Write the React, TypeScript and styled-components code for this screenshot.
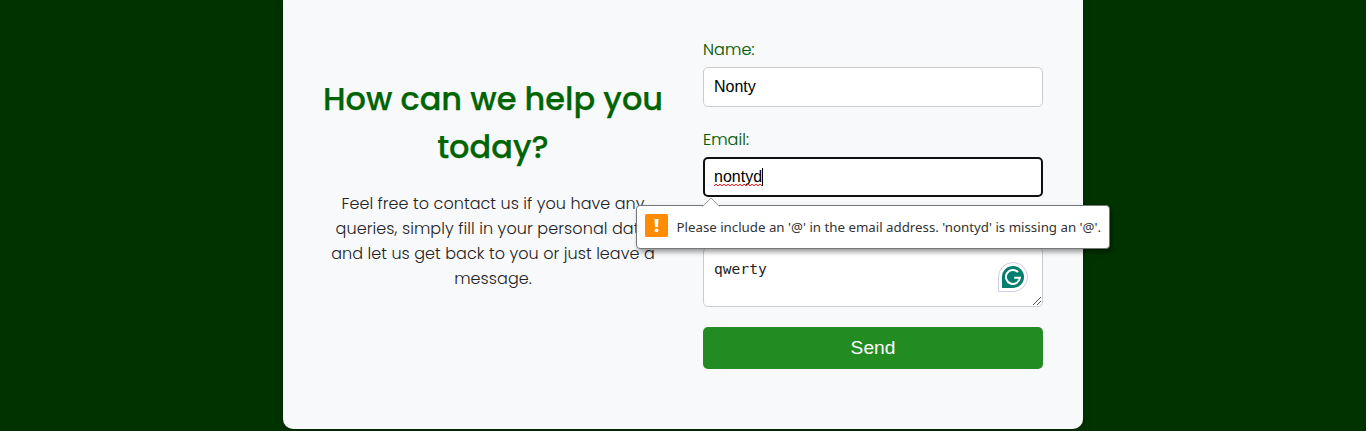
import React from "react";
import styled, { createGlobalStyle } from "styled-components";

const GlobalStyle = createGlobalStyle`
  * { box-sizing: border-box; }
  html, body { margin: 0; height: 431px; overflow: hidden; background: #003300; }
`;

const Page = styled.div`
  display: flex;
  justify-content: center;
  height: 431px;
  background: #003300;
  font-family: Poppins, Inter, "Open Sans", sans-serif;
`;

const Card = styled.main`
  display: grid;
  grid-template-columns: 340px 340px;
  gap: 40px;
  width: 800px;
  height: 429px;
  padding: 0 40px;
  background: #f8f9fb;
  border-radius: 0 0 10px 10px;
  box-shadow: 0 4px 8px rgba(0, 0, 0, 0.2);
`;

const Intro = styled.section`
  padding-top: 75px;
  text-align: center;
`;

const Title = styled.h1`
  margin: 0 0 20px;
  font-size: 32px;
  line-height: 48px;
  font-weight: 500;
  color: #006400;
  -webkit-text-stroke: 0.25px #006400;
`;

const Lead = styled.p`
  margin: 0;
  font-size: 16px;
  line-height: 25px;
  font-weight: 300;
  color: #222;
`;

const Line = styled.span<{ $track?: number }>`
  display: block;
  white-space: nowrap;
  letter-spacing: ${({ $track = 0 }) => $track}px;
`;

const Form = styled.form`
  display: flex;
  flex-direction: column;
  padding-top: 37px;
`;

const Field = styled.div`
  position: relative;
  display: flex;
  flex-direction: column;
  height: 90px;
`;

const Label = styled.label`
  height: 30px;
  font-size: 16px;
  line-height: 25px;
  font-weight: 300;
  letter-spacing: 0.1px;
  color: #005a00;
  -webkit-text-stroke: 0.15px #005a00;
`;

const InputBox = styled.div<{ $focused?: boolean }>`
  display: flex;
  align-items: center;
  height: 40px;
  padding: 0 ${({ $focused }) => ($focused ? 9 : 10)}px;
  border: ${({ $focused }) => ($focused ? "2px solid #101010" : "1px solid #ccc")};
  border-radius: 5px;
  background: #fff;
  font: 16px "Liberation Sans", Arial, sans-serif;
  color: #000;
`;

const Typed = styled.span`
  position: relative;
`;

const Squiggle = styled.svg`
  position: absolute;
  left: 0;
  top: 15px;
`;

const Caret = styled.i`
  width: 1px;
  height: 18px;
  background: #000;
`;

const Message = styled.div`
  position: relative;
  height: 60px;
  margin-top: 30px;
  padding: 11px 10px 0;
  border: 1px solid #ccc;
  border-radius: 5px;
  background: #fff;
  font: 14.6px/20px "DejaVu Sans Mono", monospace;
  color: #222;
`;

const Grip = styled.svg`
  position: absolute;
  right: 0;
  bottom: 0;
`;

const Assistant = styled.svg`
  position: absolute;
  right: 14px;
  bottom: 14px;
`;

const Send = styled.button`
  height: 42px;
  margin-top: 20px;
  border: 0;
  border-radius: 5px;
  background: #228b22;
  color: #fff;
  font: 19.2px "Liberation Sans", Arial, sans-serif;
`;

const Bubble = styled.div`
  position: absolute;
  z-index: 2;
  left: -67px;
  top: 78px;
  display: flex;
  align-items: center;
  width: 474px;
  height: 44px;
  padding: 0 8px;
  border: 1px solid #777;
  border-radius: 4px;
  background: #fff;
  box-shadow: 2px 3px 5px rgba(0, 0, 0, 0.4);
  font: 13.3px "Noto Sans", "Open Sans", sans-serif;
  color: #333;
  white-space: nowrap;
`;

const Pointer = styled.svg`
  position: absolute;
  left: 65px;
  top: -9px;
`;

const Warning = styled.svg`
  flex: none;
  margin: -4px 8.5px 0 0;
`;

const BubbleText = styled.span`
  letter-spacing: -0.01px;
`;

export default function App() {
  return (
    <Page>
      <GlobalStyle />
      <Card>
        <Intro>
          <Title>
            <Line $track={-0.05}>How can we help you</Line>
            <Line>today?</Line>
          </Title>
          <Lead>
            <Line $track={0.05}>Feel free to contact us if you have any</Line>
            <Line $track={0.08}>queries, simply fill in your personal data</Line>
            <Line $track={0.05}>and let us get back to you or just leave a</Line>
            <Line $track={0.08}>message.</Line>
          </Lead>
        </Intro>
        <Form>
          <Field>
            <Label>Name:</Label>
            <InputBox>Nonty</InputBox>
          </Field>
          <Field>
            <Label>Email:</Label>
            <InputBox $focused>
              <Typed>
                nontyd
                <Squiggle width="48" height="4" viewBox="0 0 48 4">
                  <path
                    d="M0 3L2 1L4 3L6 1L8 3L10 1L12 3L14 1L16 3L18 1L20 3L22 1L24 3L26 1L28 3L30 1L32 3L34 1L36 3L38 1L40 3L42 1L44 3L46 1L48 3"
                    fill="none"
                    stroke="#f22"
                  />
                </Squiggle>
              </Typed>
              <Caret />
            </InputBox>
            <Bubble>
              <Pointer width="18" height="10" viewBox="0 0 18 10">
                <path d="M0.5 10L9 1L17.5 10Z" fill="#fff" />
                <path d="M0.5 9.5L9 1L17.5 9.5" fill="none" stroke="#999" />
              </Pointer>
              <Warning width="23" height="23" viewBox="0 0 23 23">
                <rect width="23" height="23" rx="1.5" fill="#ff8c00" />
                <path d="M9.5 5H13.5L13 13H10Z" fill="#fff" />
                <circle cx="11.5" cy="16.3" r="1.9" fill="#fff" />
              </Warning>
              <BubbleText>
                Please include an '@' in the email address. 'nontyd' is missing an '@'.
              </BubbleText>
            </Bubble>
          </Field>
          <Message>
            qwerty
            <Assistant width="30" height="30" viewBox="0 0 30 30">
              <path
                d="M0.5 29.5V15A14.5 14.5 0 1 1 15 29.5Z"
                fill="#fff"
                stroke="#cdd0e2"
              />
              <path d="M4 26V15A11 11 0 1 1 15 26Z" fill="#027e6f" />
              <path
                d="M20 10.1A7 7 0 1 0 21.9 15.8H16.2M18.6 15.8H21.9"
                fill="none"
                stroke="#fff"
                strokeWidth="2"
              />
            </Assistant>
            <Grip width="10" height="10" viewBox="0 0 10 10">
              <path d="M1 9L9 1M5 9L9 5" stroke="#555" fill="none" />
            </Grip>
          </Message>
          <Send type="button">Send</Send>
        </Form>
      </Card>
    </Page>
  );
}
